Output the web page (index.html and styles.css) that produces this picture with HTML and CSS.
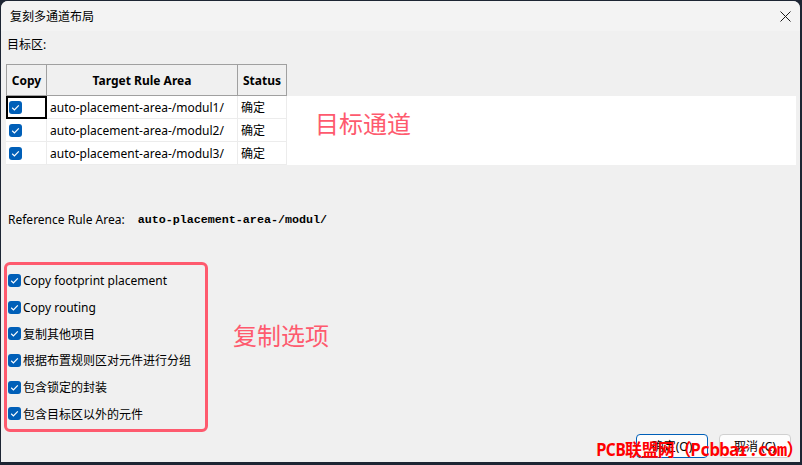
FILE: index.html
```html
<!DOCTYPE html>
<html lang="zh-CN">
<head>
    <meta charset="UTF-8">
    <title>复刻多通道布局</title>
    <link rel="stylesheet" href="styles.css">
</head>
<body>
    <div class="janela">
        <div class="titulo">
            <span>复刻多通道布局</span>
            <svg class="fechar" width="11" height="11" viewBox="0 0 11 11">
                <path d="M0.5 0.5L10.5 10.5M10.5 0.5L0.5 10.5" stroke="#1a1a1a" stroke-width="1"/>
            </svg>
        </div>

        <div class="conteudo">
            <div class="rotulo">目标区:</div>

            <div class="grade">
                <div class="cab">Copy</div>
                <div class="cab">Target Rule Area</div>
                <div class="cab">Status</div>
                <div class="cab vazio"></div>

                <div class="cel foco"><span class="caixa"></span></div>
                <div class="cel">auto-placement-area-/modul1/</div>
                <div class="cel">确定</div>
                <div class="cel vazio nota-cel"><span class="nota">目标通道</span></div>

                <div class="cel"><span class="caixa"></span></div>
                <div class="cel">auto-placement-area-/modul2/</div>
                <div class="cel">确定</div>
                <div class="cel vazio"></div>

                <div class="cel"><span class="caixa"></span></div>
                <div class="cel">auto-placement-area-/modul3/</div>
                <div class="cel">确定</div>
                <div class="cel vazio"></div>
            </div>

            <div class="referencia">
                <span>Reference Rule Area:</span>
                <b class="mono">auto-placement-area-/modul/</b>
            </div>

            <div class="opcoes-linha">
                <div class="opcoes">
                    <label class="opcao"><span class="caixa"></span>Copy footprint placement</label>
                    <label class="opcao"><span class="caixa"></span>Copy routing</label>
                    <label class="opcao"><span class="caixa"></span>复制其他项目</label>
                    <label class="opcao"><span class="caixa"></span>根据布置规则区对元件进行分组</label>
                    <label class="opcao"><span class="caixa"></span>包含锁定的封装</label>
                    <label class="opcao"><span class="caixa"></span>包含目标区以外的元件</label>
                </div>
                <span class="nota nota-opcoes">复制选项</span>
            </div>

            <div class="botoes">
                <button class="btn padrao">确定(O)</button>
                <button class="btn">取消 (C)</button>
                <span class="marca">PCB联盟网（Pcbbar.com）</span>
            </div>
        </div>
    </div>
</body>
</html>
```

FILE: styles.css
```css
body {
    margin: 0;
    background: #1d2533;
    font-family: 'Noto Sans', 'Noto Sans CJK SC', sans-serif;
    font-size: 12px;
    color: #000;
    height: 465px;
    overflow: hidden;
}

.janela {
    margin: 1px 0 0 1px;
    width: 799px;
    height: 461px;
    background: #f0f0f0;
    border-radius: 7px 7px 0 0;
    overflow: hidden;
}

.titulo {
    height: 30px;
    background: #f3f3f3;
    display: flex;
    align-items: center;
    justify-content: space-between;
    padding: 0 9px 0 9px;
    font-size: 12px;
}

.conteudo {
    padding: 0 4px 0 5px;
    position: relative;
}

.rotulo {
    margin: 5px 0 0 1px;
    line-height: 17px;
}

/* tabela dos canais */
.grade {
    margin-top: 11px;
    display: grid;
    grid-template-columns: 41px 191px 49px 1fr;
    grid-template-rows: 32px 23px 23px 23px;
    background: #fff;
    height: 101px;
}

.cab {
    background: #f0f0f0;
    border: 1px solid #a0a0a0;
    border-left: none;
    font-weight: bold;
    display: flex;
    align-items: center;
    justify-content: center;
}

.cab:first-child {
    border-left: 1px solid #a0a0a0;
}

.cab.vazio {
    border: none;
}

.cel {
    border-right: 1px solid #ececec;
    border-bottom: 1px solid #ececec;
    display: flex;
    align-items: center;
    padding-left: 3px;
    white-space: nowrap;
}

.cel.vazio {
    border: none;
}

.cel.foco {
    border: 2px solid #000;
    padding-left: 1px;
}

.nota-cel {
    position: relative;
}

.nota {
    color: #fe5a6e;
    font-size: 24px;
    font-family: 'Noto Sans CJK SC', sans-serif;
}

.nota-cel .nota {
    position: absolute;
    left: 28px;
    top: 10px;
    line-height: 34px;
}

.caixa {
    display: inline-block;
    width: 13px;
    height: 13px;
    border-radius: 3px;
    background: #005fb8 url("data:image/svg+xml,%3Csvg xmlns='http://www.w3.org/2000/svg' viewBox='0 0 13 13'%3E%3Cpath d='M3.2 6.8l2.2 2.1 4.4-4.6' fill='none' stroke='%23fff' stroke-width='1.2'/%3E%3C/svg%3E") no-repeat center;
    flex-shrink: 0;
}

.referencia {
    margin: 46px 0 0 2px;
    line-height: 18px;
    display: flex;
    align-items: center;
    gap: 13px;
}

.mono {
    font-family: 'Liberation Mono', monospace;
    font-size: 11.7px;
}

/* opções de cópia */
.opcoes-linha {
    margin: 33px 0 0 -2px;
    display: flex;
    align-items: flex-start;
}

.opcoes {
    width: 198px;
    height: 162px;
    border: 3px solid #fe5a6e;
    border-radius: 6px;
    padding-top: 2px;
    box-sizing: content-box;
}

.opcao {
    display: flex;
    align-items: center;
    gap: 2px;
    height: 26.7px;
    padding-left: 1px;
}

.nota-opcoes {
    margin: 61px 0 0 25px;
    line-height: 24px;
}

.botoes {
    margin-top: 2px;
    display: flex;
    justify-content: flex-end;
    gap: 11px;
    padding-right: 5px;
    position: relative;
}

.btn {
    width: 72px;
    height: 24px;
    background: #fdfdfd;
    border: 1px solid #d0d0d0;
    border-radius: 4px;
    font-family: 'Noto Sans', 'Noto Sans CJK SC', sans-serif;
    font-size: 12px;
    padding: 0;
}

.btn.padrao {
    border-color: #005fb8;
}

.marca {
    position: absolute;
    right: -7px;
    top: 5px;
    color: #ff0000;
    font-weight: bold;
    font-size: 17px;
    font-family: 'Noto Sans Mono', 'DejaVu Sans Mono', 'Noto Sans CJK SC', monospace;
    line-height: 22px;
    letter-spacing: -0.6px;
}
```
